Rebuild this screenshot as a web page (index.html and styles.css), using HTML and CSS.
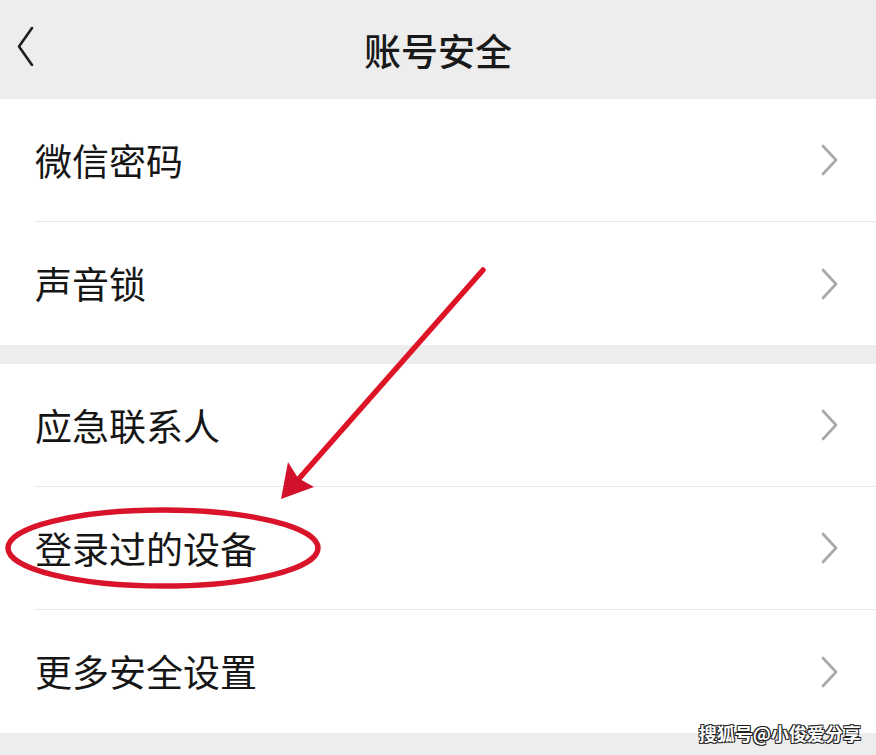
FILE: index.html
```html
<!DOCTYPE html>
<html lang="zh-CN">
<head>
  <meta charset="UTF-8" />
  <meta name="viewport" content="width=device-width, initial-scale=1.0" />
  <title>账号安全</title>
  <link rel="stylesheet" href="styles.css">
</head>
<body>

<div id="page">
  <div class="topbar">
    <svg class="back" width="20" height="40" viewBox="0 0 20 40">
      <polyline points="15,2 2,20.5 15,39" fill="none" stroke="#1e1e1e" stroke-width="2.6" stroke-linejoin="round" stroke-linecap="round" />
    </svg>
    <h1 class="title">账号安全</h1>
  </div>

  <div class="group">
    <div class="row">
      <span class="label">微信密码</span>
      <svg class="chevron" width="20" height="32" viewBox="0 0 20 32"><polyline points="3,2 16,16 3,30" /></svg>
    </div>
    <div class="row">
      <span class="label">声音锁</span>
      <svg class="chevron" width="20" height="32" viewBox="0 0 20 32"><polyline points="3,2 16,16 3,30" /></svg>
    </div>
  </div>

  <div class="group">
    <div class="row">
      <span class="label">应急联系人</span>
      <svg class="chevron" width="20" height="32" viewBox="0 0 20 32"><polyline points="3,2 16,16 3,30" /></svg>
    </div>
    <div class="row">
      <span class="label">登录过的设备</span>
      <svg class="chevron" width="20" height="32" viewBox="0 0 20 32"><polyline points="3,2 16,16 3,30" /></svg>
    </div>
    <div class="row">
      <span class="label">更多安全设置</span>
      <svg class="chevron" width="20" height="32" viewBox="0 0 20 32"><polyline points="3,2 16,16 3,30" /></svg>
    </div>
  </div>

  <!-- 红色标注：箭头 + 圈 -->
  <svg class="marks" width="876" height="755" viewBox="0 0 876 755">
    <line x1="483" y1="270" x2="289" y2="490" stroke="#dc1426" stroke-width="5.5" stroke-linecap="round" />
    <polygon points="281,499 288,462 298,478 314,487" fill="#d2122a" />
    <ellipse cx="163" cy="548" rx="155" ry="38" fill="none" stroke="#d9142a" stroke-width="5.5" />
  </svg>

  <div class="watermark">搜狐号@小俊爱分享</div>
</div>

</body>
</html>
```

FILE: styles.css
```css
html, body {
  margin: 0;
  background: #ededed;
  font-family: "Noto Sans CJK SC", "Noto Sans", sans-serif;
}

#page {
  position: relative;
  width: 876px;
  height: 755px;
  overflow: hidden;
}

.topbar {
  height: 99px;
  display: flex;
  align-items: center;
  justify-content: center;
  position: relative;
  background: #ededed;
}

.back {
  position: absolute;
  left: 17px;
  top: 26px;
}

.title {
  margin: 0;
  font-size: 37px;
  font-weight: 500;
  color: #191919;
}

.group {
  background: #fff;
  padding-left: 35px;
  margin-bottom: 19px;
}

.row {
  height: 123px;
  box-sizing: border-box;
  display: flex;
  align-items: center;
  justify-content: space-between;
  padding-right: 36px;
  border-bottom: 1px solid #e6e6e6;
}

.row:last-child {
  border-bottom: none;
}

.label {
  font-size: 37px;
  color: #161616;
  line-height: 1;
}

.chevron {
  fill: none;
  stroke: #a8a8a8;
  stroke-width: 2.6;
  stroke-linecap: round;
  stroke-linejoin: round;
}

.marks {
  position: absolute;
  left: 0;
  top: 0;
  pointer-events: none;
}

.watermark {
  position: absolute;
  right: 15px;
  bottom: 9px;
  font-size: 18px;
  font-weight: bold;
  color: #fff;
  text-shadow: 1px 1px 0 #222, -1px -1px 0 #222, 1px -1px 0 #222, -1px 1px 0 #222;
}
```
